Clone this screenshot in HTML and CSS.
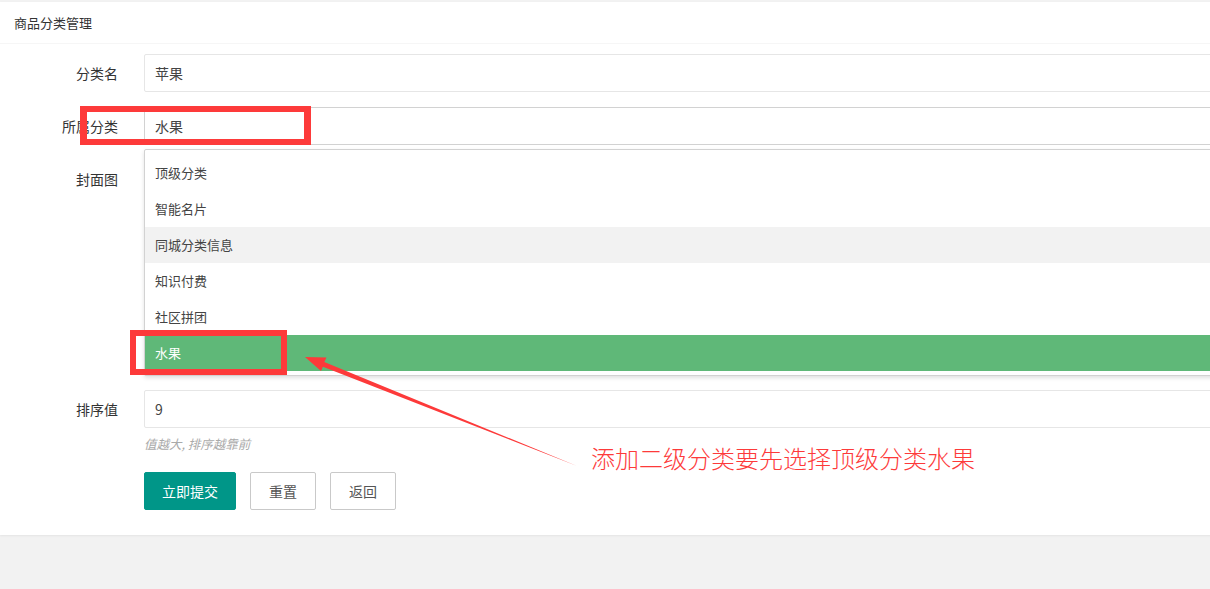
FILE: index.html
```html
<!DOCTYPE html>
<html lang="zh-CN">
<head>
    <meta charset="UTF-8">
    <meta name="viewport" content="width=device-width, initial-scale=1.0">
    <title>商品分类管理</title>
    <link rel="stylesheet" href="styles.css">
</head>
<body>
    <div class="card">
        <div class="card-header">商品分类管理</div>
        <form class="card-body">
            <div class="form-item">
                <label class="form-label">分类名</label>
                <div class="input-block">
                    <input class="input" type="text" value="苹果">
                </div>
            </div>

            <div class="form-item">
                <label class="form-label">所属分类</label>
                <div class="input-block select">
                    <input class="input input-select" type="text" value="水果" readonly>
                    <dl class="select-options">
                        <dd>顶级分类</dd>
                        <dd>智能名片</dd>
                        <dd class="hover">同城分类信息</dd>
                        <dd>知识付费</dd>
                        <dd>社区拼团</dd>
                        <dd class="selected">水果</dd>
                    </dl>
                </div>
            </div>

            <div class="form-item cover-row">
                <label class="form-label">封面图</label>
                <div class="input-block">
                    <div class="upload"></div>
                </div>
            </div>

            <div class="form-item sort-row">
                <label class="form-label">排序值</label>
                <div class="input-block">
                    <input class="input" type="text" value="9">
                    <div class="form-tip">值越大, 排序越靠前</div>
                </div>
            </div>

            <div class="form-item">
                <div class="form-label"></div>
                <div class="btn-group">
                    <button type="button" class="btn btn-primary">立即提交</button>
                    <button type="reset" class="btn">重置</button>
                    <button type="button" class="btn">返回</button>
                </div>
            </div>
        </form>
    </div>

    <!-- 标注 -->
    <div class="mark mark-parent"></div>
    <div class="mark mark-option"></div>
    <svg class="mark-arrow" width="1210" height="589" viewBox="0 0 1210 589">
        <polygon points="305,357 326.5,357.6 324.3,362 577,466 322.9,366.8 321,371" fill="#fd3a3a"/>
    </svg>
    <div class="mark-text">添加二级分类要先选择顶级分类水果</div>
</body>
</html>
```

FILE: styles.css
```css
html, body {
    margin: 0;
    padding: 0;
}
body {
    font-family: "Noto Sans CJK SC", "Liberation Sans", sans-serif;
    font-size: 14px;
    color: #333;
    background-color: #f2f2f2;
    padding-top: 2px;
    overflow: hidden;
    position: relative;
    height: 587px;
}
.card {
    background: #fff;
    box-shadow: 0 1px 2px rgba(0, 0, 0, 0.06);
    width: 1260px;
}
.card-header {
    height: 41px;
    line-height: 41px;
    padding-left: 14px;
    font-size: 13px;
    color: #333;
    border-bottom: 1px solid #f6f6f6;
}
.card-body {
    margin: 0;
    padding: 10px 0 25px;
}
.form-item {
    display: flex;
    margin-bottom: 15px;
}
.form-item:last-child {
    margin-bottom: 0;
}
.form-label {
    width: 144px;
    flex-shrink: 0;
    box-sizing: border-box;
    padding-right: 26px;
    text-align: right;
    line-height: 38px;
    color: #333;
}
.input-block {
    flex: 1;
    position: relative;
}
.input {
    display: block;
    width: 100%;
    height: 38px;
    box-sizing: border-box;
    padding: 0 10px;
    border: 1px solid #e6e6e6;
    border-radius: 2px;
    font-family: inherit;
    font-size: 14px;
    color: #444;
    background: #fff;
    outline: none;
}
.input-select {
    border-color: #d2d2d2;
}
.select-options {
    position: absolute;
    top: 42px;
    left: 0;
    right: 0;
    margin: 0;
    padding: 5px 0 4px;
    background: #fff;
    border: 1px solid #d2d2d2;
    border-radius: 2px;
    box-shadow: 0 2px 4px rgba(0, 0, 0, 0.12);
    z-index: 5;
}
.select-options dd {
    margin: 0;
    height: 36px;
    line-height: 36px;
    padding: 0 10px;
    color: #444;
    font-size: 13px;
}
.select-options dd.hover {
    background: #f2f2f2;
}
.select-options dd.selected {
    background: #5fb878;
    color: #fff;
}
.cover-row .upload {
    height: 215px;
}
.sort-row {
    margin-bottom: 18px;
}
.form-tip {
    margin-top: 6px;
    line-height: 20px;
    font-size: 12.5px;
    font-style: italic;
    color: #aaa;
}
.btn-group {
    display: flex;
    gap: 14px;
}
.btn {
    height: 38px;
    padding: 0 18px;
    border: 1px solid #c9c9c9;
    border-radius: 2px;
    background: #fff;
    color: #555;
    font-family: inherit;
    font-size: 14px;
    cursor: pointer;
}
.btn-primary {
    padding: 0 17px;
    background: #009688;
    border-color: #009688;
    color: #fff;
}
.mark {
    position: absolute;
    box-sizing: border-box;
    border: 6px solid #fd3a3a;
    z-index: 10;
}
.mark-parent {
    left: 80px;
    top: 106px;
    width: 231px;
    height: 39px;
    border-width: 6px 7px 6px 7px;
}
.mark-option {
    left: 130px;
    top: 330px;
    width: 157px;
    height: 45px;
}
.mark-arrow {
    position: absolute;
    left: 0;
    top: 0;
    z-index: 10;
}
.mark-text {
    position: absolute;
    left: 591px;
    top: 443px;
    font-size: 24px;
    line-height: 30px;
    font-weight: 300;
    color: #fd3a3a;
    z-index: 10;
}
```
